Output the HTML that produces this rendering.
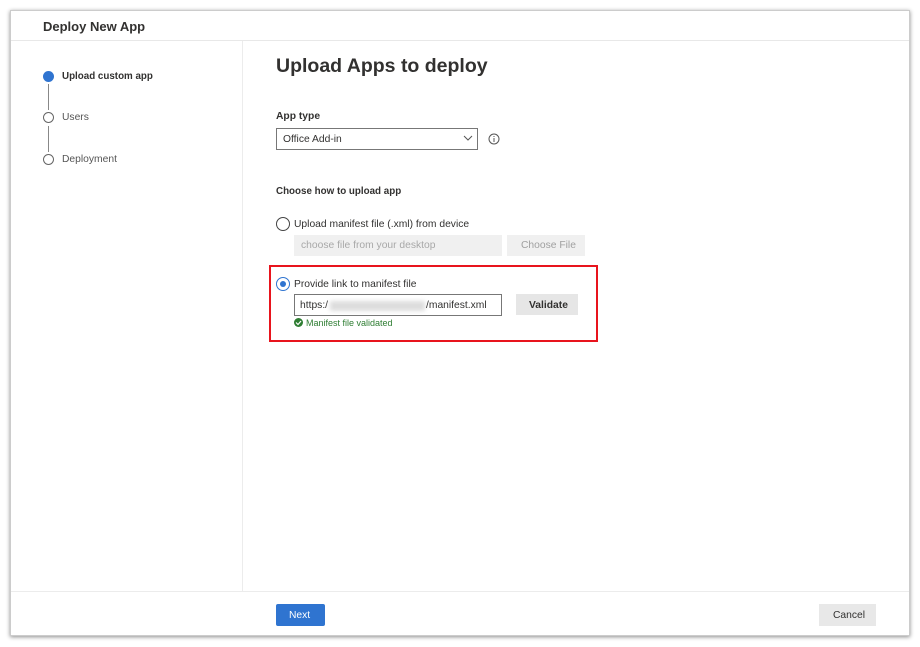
<!DOCTYPE html>
<html><head><style>
*{box-sizing:border-box;margin:0;padding:0}
body{width:920px;height:647px;background:#fff;font-family:"Liberation Sans",sans-serif;color:#323130;position:relative;overflow:hidden}
.card{position:absolute;left:10px;top:10px;width:900px;height:626px;background:#fff;box-shadow:0 1px 4px rgba(0,0,0,.45);border:1px solid #ccc}
.abs{position:absolute}
.t{font-size:10.3px;white-space:nowrap}
</style></head><body>
<div class="card"></div>
<div class="abs" style="left:11px;top:40px;width:898px;height:1px;background:#e8e8e8"></div>
<div class="abs" style="left:242px;top:41px;width:1px;height:550px;background:#ececec"></div>
<div class="abs" style="left:11px;top:591px;width:898px;height:1px;background:#ececec"></div>
<div class="abs" style="left:43px;top:19px;font-size:13px;font-weight:bold">Deploy New App</div>

<div class="abs" style="left:43px;top:71px;width:11px;height:11px;border-radius:50%;background:#2f74d0"></div>
<div class="abs" style="left:48px;top:84px;width:1px;height:26px;background:#888"></div>
<div class="abs" style="left:43px;top:112px;width:11px;height:11px;border-radius:50%;border:1px solid #666"></div>
<div class="abs" style="left:48px;top:126px;width:1px;height:26px;background:#888"></div>
<div class="abs" style="left:43px;top:154px;width:11px;height:11px;border-radius:50%;border:1px solid #666"></div>
<div class="abs t" style="left:62px;top:71px;font-weight:bold;font-size:9.8px">Upload custom app</div>
<div class="abs t" style="left:62px;top:112px;color:#555">Users</div>
<div class="abs t" style="left:62px;top:154px;color:#555">Deployment</div>

<div class="abs" style="left:276px;top:55px;font-size:19.5px;font-weight:bold">Upload Apps to deploy</div>
<div class="abs t" style="left:276px;top:111px;font-weight:bold">App type</div>
<div class="abs" style="left:276px;top:128px;width:202px;height:22px;border:1px solid #777"></div>
<div class="abs t" style="left:283px;top:134px">Office Add-in</div>
<svg class="abs" style="left:463px;top:134px" width="10" height="8"><path d="M1 2 L5 6 L9 2" stroke="#555" fill="none"/></svg>
<svg class="abs" style="left:488px;top:133px" width="12" height="12"><circle cx="6" cy="6" r="5" stroke="#555" fill="none"/><path d="M6 5v4M6 3v1" stroke="#555"/></svg>

<div class="abs t" style="left:276px;top:186px;font-weight:bold;font-size:9.8px">Choose how to upload app</div>
<div class="abs" style="left:276px;top:217px;width:14px;height:14px;border-radius:50%;border:1px solid #444"></div>
<div class="abs t" style="left:294px;top:219px">Upload manifest file (.xml) from device</div>
<div class="abs" style="left:294px;top:235px;width:208px;height:21px;background:#f0f0f0"></div>
<div class="abs t" style="left:301px;top:240px;color:#a8a8a8">choose file from your desktop</div>
<div class="abs" style="left:507px;top:235px;width:78px;height:21px;background:#f0f0f0"></div>
<div class="abs t" style="left:521px;top:240px;color:#a0a0a0">Choose File</div>

<div class="abs" style="left:269px;top:265px;width:329px;height:77px;border:2px solid #e8141d"></div>
<div class="abs" style="left:276px;top:277px;width:14px;height:14px;border-radius:50%;border:1px solid #2f74d0"></div>
<div class="abs" style="left:280px;top:281px;width:6px;height:6px;border-radius:50%;background:#2f74d0"></div>
<div class="abs t" style="left:294px;top:279px">Provide link to manifest file</div>
<div class="abs" style="left:294px;top:294px;width:208px;height:22px;border:1px solid #777"></div>
<div class="abs t" style="left:300px;top:300px">https:/</div>
<div class="abs" style="left:330px;top:301px;width:95px;height:10px;background:#ddd;filter:blur(2px)"></div>
<div class="abs t" style="left:426px;top:300px">/manifest.xml</div>
<div class="abs" style="left:516px;top:294px;width:62px;height:21px;background:#e6e6e6"></div>
<div class="abs t" style="left:529px;top:300px;font-weight:bold">Validate</div>
<div class="abs" style="left:294px;top:318px;width:9px;height:9px;border-radius:50%;background:#2e7d32"></div>
<svg class="abs" style="left:294px;top:318px" width="9" height="9"><path d="M2 4.5 L4 6.5 L7 3" stroke="#fff" stroke-width="1.2" fill="none"/></svg>
<div class="abs" style="left:306px;top:318px;font-size:9px;color:#2e7d32">Manifest file validated</div>

<div class="abs" style="left:276px;top:604px;width:49px;height:22px;background:#2f74d0;border-radius:2px"></div>
<div class="abs t" style="left:289px;top:610px;color:#fff">Next</div>
<div class="abs" style="left:819px;top:604px;width:57px;height:22px;background:#e8e8e8"></div>
<div class="abs t" style="left:833px;top:610px">Cancel</div>
</body></html>
